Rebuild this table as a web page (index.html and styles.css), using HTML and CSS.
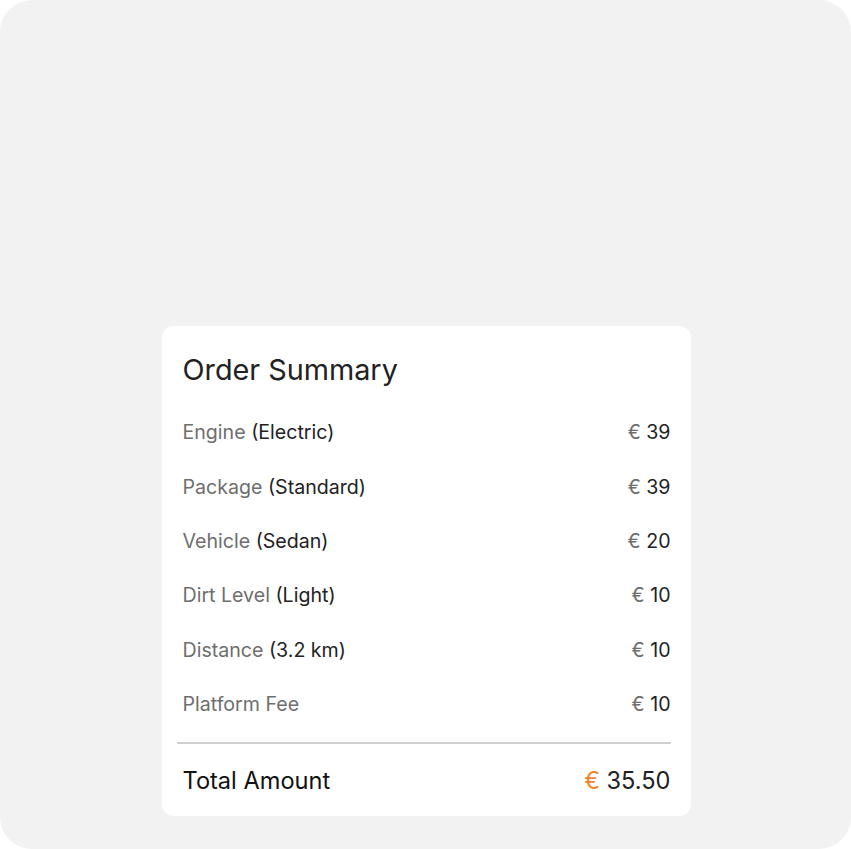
FILE: index.html
```html
<!DOCTYPE HTML>
<html>
<head>
<meta charset="utf-8">
<meta name="viewport" content="width=device-width,initial-scale=1.0">
<title>Order Summary</title>
<link rel="stylesheet" href="styles.css">
</head>
<body>
  <div class="frame">
    <div class="card">
      <h2 class="title">Order Summary</h2>
      <div class="rows">
        <div class="row"><span class="label">Engine <b>(Electric)</b></span><span class="price"><i>€</i> 39</span></div>
        <div class="row"><span class="label">Package <b>(Standard)</b></span><span class="price"><i>€</i> 39</span></div>
        <div class="row"><span class="label">Vehicle <b>(Sedan)</b></span><span class="price"><i>€</i> 20</span></div>
        <div class="row"><span class="label">Dirt Level <b>(Light)</b></span><span class="price"><i>€</i> 10</span></div>
        <div class="row"><span class="label">Distance <b>(3.2 km)</b></span><span class="price"><i>€</i> 10</span></div>
        <div class="row"><span class="label">Platform Fee</span><span class="price"><i>€</i> 10</span></div>
      </div>
      <div class="divider"></div>
      <div class="total"><span>Total Amount</span><span class="sum"><i>€</i> 35.50</span></div>
    </div>
  </div>
</body>
</html>
```

FILE: styles.css
```css
html { height:100%; }
body { margin:0; padding:0; background:#fff; font-family:"Inter", "Noto Sans", sans-serif; }
.frame { width:851px; height:849px; box-sizing:border-box; background:#f2f2f2; border-radius:32px; display:flex; justify-content:center; align-items:flex-end; padding:0 0 33px 1px; }
.card { width:529px; background:#fff; border-radius:12px; padding:26px 20px 18px 21px; box-sizing:border-box; }
.title { margin:0 0 17px 0; font-size:28.8px; line-height:36px; font-weight:400; color:#222; }
.row { display:flex; justify-content:space-between; align-items:center; height:54.3px; font-size:19.6px; }
.label { color:#6e6e6e; }
.label b { font-weight:400; color:#222; }
.price { color:#222; }
.price i, .sum i { font-style:normal; color:#6e6e6e; }
.divider { height:2px; background:#d0d0d0; margin:11px 0 0 -6px; }
.total { display:flex; justify-content:space-between; align-items:center; height:36px; margin-top:18px; font-size:23.6px; color:#111; }
.sum { color:#222; }
.sum i { color:#f4832e; }
```
